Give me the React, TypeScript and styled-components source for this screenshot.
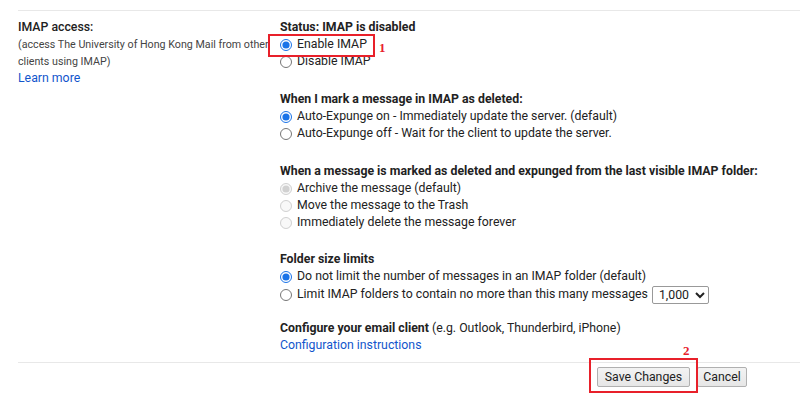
import styled, { createGlobalStyle } from "styled-components";

const Global = createGlobalStyle`
  html, body {
    margin: 0;
    padding: 0;
    background: #fff;
  }
  body {
    font-family: Roboto, "Liberation Sans", Arial, sans-serif;
    font-size: 12.3px;
    color: #222;
  }
`;

const Page = styled.div`
  position: relative;
  width: 800px;
  height: 400px;
  overflow: hidden;
  padding-left: 18px;
  box-sizing: border-box;
`;

const Settings = styled.div`
  border-top: 1px solid #e8e8e8;
  margin-top: 10px;
  display: grid;
  grid-template-columns: 262px 1fr;
  padding-top: 8px;
  padding-bottom: 8px;
`;

const LabelCol = styled.div`
  line-height: 17px;
`;

const LabelTitle = styled.div`
  font-weight: 500;
  color: #222;
`;

const LabelNote = styled.div`
  font-size: 10.7px;
  color: #444;
  width: 262px;
`;

const Link = styled.a`
  color: #15c;
  text-decoration: none;
  cursor: pointer;
`;

const Options = styled.div`
  display: flex;
  flex-direction: column;
  line-height: 17px;
`;

const Group = styled.div<{ $gap?: number }>`
  display: flex;
  flex-direction: column;
  margin-top: ${({ $gap }) => $gap ?? 0}px;
`;

const Heading = styled.div`
  font-weight: 700;
  color: #222;
`;

const Row = styled.label<{ $tall?: boolean }>`
  display: flex;
  align-items: center;
  height: ${({ $tall }) => ($tall ? "19px" : "17px")};
  color: #222;
`;

const Radio = styled.input.attrs({ type: "radio" })`
  width: 12px;
  height: 12px;
  margin: 0 5px 0 0;
  accent-color: #1a73e8;
`;

const Select = styled.select`
  margin-left: 4px;
  height: 18px;
  width: 57px;
  font-family: Roboto, "Liberation Sans", Arial, sans-serif;
  font-size: 12.3px;
  color: #222;
  border: 1px solid #999;
  border-radius: 2px;
  background: #fff;
  padding: 0 0 0 2px;
`;

const Normal = styled.span`
  font-weight: 400;
`;

const Footer = styled.div`
  border-top: 1px solid #e8e8e8;
  display: flex;
  justify-content: flex-end;
  gap: 7px;
  padding: 4px 53px 0 0;
`;

const Button = styled.button<{ $w: number }>`
  width: ${({ $w }) => $w}px;
  height: 20px;
  padding: 0;
  font-family: Roboto, "Liberation Sans", Arial, sans-serif;
  font-size: 12.3px;
  color: #222;
  background: linear-gradient(#f3f3f3, #e6e6e6);
  border: 1px solid #b0b0b0;
  border-radius: 2px;
`;

const Marker = styled.div<{ $x: number; $y: number; $w: number; $h: number }>`
  position: absolute;
  left: ${({ $x }) => $x}px;
  top: ${({ $y }) => $y}px;
  width: ${({ $w }) => $w}px;
  height: ${({ $h }) => $h}px;
  border: 2px solid #e8202a;
  box-sizing: border-box;
  pointer-events: none;
`;

const MarkerNum = styled.span<{ $x: number; $y: number }>`
  position: absolute;
  left: ${({ $x }) => $x}px;
  top: ${({ $y }) => $y}px;
  font-family: "Liberation Serif", "Times New Roman", serif;
  font-weight: 700;
  font-size: 13px;
  line-height: 13px;
  color: #e8202a;
`;

export default function App() {
  return (
    <>
      <Global />
      <Page>
        <Settings>
          <LabelCol>
            <LabelTitle>IMAP access:</LabelTitle>
            <LabelNote>
              (access The University of Hong Kong Mail from other clients using IMAP)
            </LabelNote>
            <Link>Learn more</Link>
          </LabelCol>
          <Options>
            <Group>
              <Heading>Status: IMAP is disabled</Heading>
              <Row>
                <Radio name="status" defaultChecked />
                Enable IMAP
              </Row>
              <Row>
                <Radio name="status" />
                Disable IMAP
              </Row>
            </Group>
            <Group $gap={21}>
              <Heading>When I mark a message in IMAP as deleted:</Heading>
              <Row>
                <Radio name="expunge" defaultChecked />
                Auto-Expunge on - Immediately update the server. (default)
              </Row>
              <Row>
                <Radio name="expunge" />
                Auto-Expunge off - Wait for the client to update the server.
              </Row>
            </Group>
            <Group $gap={21}>
              <Heading>
                When a message is marked as deleted and expunged from the last visible IMAP folder:
              </Heading>
              <Row>
                <Radio name="deleted" defaultChecked disabled />
                Archive the message (default)
              </Row>
              <Row>
                <Radio name="deleted" disabled />
                Move the message to the Trash
              </Row>
              <Row>
                <Radio name="deleted" disabled />
                Immediately delete the message forever
              </Row>
            </Group>
            <Group $gap={20}>
              <Heading>Folder size limits</Heading>
              <Row>
                <Radio name="limit" defaultChecked />
                Do not limit the number of messages in an IMAP folder (default)
              </Row>
              <Row $tall>
                <Radio name="limit" />
                Limit IMAP folders to contain no more than this many messages
                <Select defaultValue="1000">
                  <option value="1000">1,000</option>
                  <option value="2000">2,000</option>
                  <option value="5000">5,000</option>
                  <option value="10000">10,000</option>
                </Select>
              </Row>
            </Group>
            <Group $gap={16}>
              <Heading>
                Configure your email client <Normal>(e.g. Outlook, Thunderbird, iPhone)</Normal>
              </Heading>
              <Link>Configuration instructions</Link>
            </Group>
          </Options>
        </Settings>
        <Footer>
          <Button $w={93}>Save Changes</Button>
          <Button $w={50}>Cancel</Button>
        </Footer>
        <Marker $x={268} $y={34} $w={107} $h={23} />
        <MarkerNum $x={379} $y={41}>1</MarkerNum>
        <Marker $x={589} $y={358} $w={109} $h={35} />
        <MarkerNum $x={683} $y={344}>2</MarkerNum>
      </Page>
    </>
  );
}
